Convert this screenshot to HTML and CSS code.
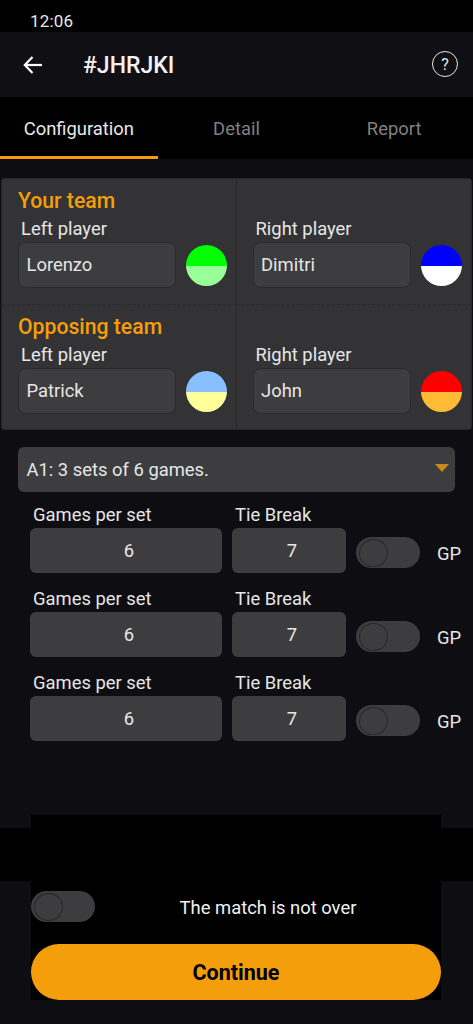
FILE: index.html
```html
<!DOCTYPE html>
<html lang="en">
<head>
<meta charset="utf-8">
<title>#JHRJKI</title>
<link rel="stylesheet" href="styles.css">
</head>
<body>
<div class="app">
  <div class="status">12:06</div>
  <header class="appbar">
    <svg class="back" width="22" height="20" viewBox="0 0 22 20" fill="none" stroke="#fff" stroke-width="2.2"><path d="M20 10H3"/><path d="M10.5 2 2.8 10l7.7 8"/></svg>
    <h1 class="title">#JHRJKI</h1>
    <span class="help">?</span>
  </header>
  <nav class="tabs">
    <div class="tab active">Configuration</div>
    <div class="tab">Detail</div>
    <div class="tab">Report</div>
  </nav>
  <main class="content">
    <section class="card">
      <div class="cell">
        <h2 class="team">Your team</h2>
        <div class="label">Left player</div>
        <div class="player"><div class="input">Lorenzo</div><div class="ball ball-green"></div></div>
      </div>
      <div class="cell cell-right">
        <div class="team team-spacer"></div>
        <div class="label">Right player</div>
        <div class="player"><div class="input">Dimitri</div><div class="ball ball-blue"></div></div>
      </div>
      <div class="cell cell-bottom">
        <h2 class="team">Opposing team</h2>
        <div class="label">Left player</div>
        <div class="player"><div class="input">Patrick</div><div class="ball ball-sky"></div></div>
      </div>
      <div class="cell cell-right cell-bottom">
        <div class="team team-spacer"></div>
        <div class="label">Right player</div>
        <div class="player"><div class="input">John</div><div class="ball ball-red"></div></div>
      </div>
    </section>
    <div class="select"><span>A1: 3 sets of 6 games.</span><i class="caret"></i></div>
    <div class="sets">
      <div class="set">
        <div class="field field-games"><div class="set-label">Games per set</div><div class="num">6</div></div>
        <div class="field field-tb"><div class="set-label">Tie Break</div><div class="num">7</div></div>
        <div class="switch"><i class="knob"></i></div>
        <div class="gp">GP</div>
      </div>
      <div class="set">
        <div class="field field-games"><div class="set-label">Games per set</div><div class="num">6</div></div>
        <div class="field field-tb"><div class="set-label">Tie Break</div><div class="num">7</div></div>
        <div class="switch"><i class="knob"></i></div>
        <div class="gp">GP</div>
      </div>
      <div class="set">
        <div class="field field-games"><div class="set-label">Games per set</div><div class="num">6</div></div>
        <div class="field field-tb"><div class="set-label">Tie Break</div><div class="num">7</div></div>
        <div class="switch"><i class="knob"></i></div>
        <div class="gp">GP</div>
      </div>
    </div>
  </main>
  <footer class="footer">
    <div class="over">
      <div class="switch"><i class="knob"></i></div>
      <div class="over-text">The match is not over</div>
    </div>
    <button class="continue">Continue</button>
  </footer>
</div>
</body>
</html>
```
FILE: styles.css
```css
* { box-sizing: border-box; }
html, body { margin: 0; padding: 0; background: #0d0d12; }
body { font-family: Roboto, "Liberation Sans", sans-serif; color: #e6e6e6; }
.app { width: 473px; height: 1024px; overflow: hidden; display: flex; flex-direction: column; position: relative; }

.status { height: 32px; background: #000; color: #e8e8e8; font-size: 17px; line-height: 17px; padding: 13px 0 0 30px; letter-spacing: 0.2px; }

.appbar { height: 65px; background: #101014; display: flex; align-items: center; padding: 0 15px 0 22px; }
.back { flex: none; }
.title { margin: 1px 0 0 39px; flex: 1; font-size: 23px; font-weight: 500; color: #f2f2f2; }
.help { width: 26px; height: 26px; border: 1.3px solid #e8e8e8; border-radius: 50%; display: flex; align-items: center; justify-content: center; font-size: 16px; color: #e8e8e8; margin-top: -1px; }

.tabs { height: 62px; background: #000; display: grid; grid-template-columns: repeat(3, 1fr); }
.tab { display: flex; align-items: center; justify-content: center; font-size: 18.4px; color: #808080; padding-top: 1px; }
.tab.active { color: #e8e8e8; border-bottom: 3px solid #f59e0b; padding-top: 4px; }

.content { flex: 1; padding-top: 19px; }

.card { margin: 0 1px 0 1px; height: 252px; background: #333336; border: 1px solid #262629; border-radius: 3px; display: grid; grid-template-columns: 234px 1fr; grid-template-rows: 125px 1fr; }
.cell { padding: 9px 0 0 16px; }
.cell-right { border-left: 1px solid #28282b; padding-left: 15.5px; }
.cell-bottom { border-top: 1px dashed #2a2a2d; }
.team { margin: 0; height: 25px; font-size: 21.2px; line-height: 25px; font-weight: 500; color: #f59e0b; }
.label { font-size: 18.4px; line-height: 24px; margin: 4px 0 0 3px; color: #e6e6e6; height: 24px; }
.player { display: flex; align-items: center; gap: 10px; margin-top: 1px; }
.input { width: 158px; height: 46px; background: #3d3d40; border: 1px solid #2a2a2d; border-radius: 8px; font-size: 18.4px; line-height: 44px; padding-left: 7.5px; color: #e6e6e6; }
.ball { width: 41px; height: 41px; border-radius: 50%; }
.ball-green { background: linear-gradient(#00ff00 50%, #99ff99 50%); }
.ball-blue { background: linear-gradient(#0000ff 50%, #ffffff 50%); }
.ball-sky { background: linear-gradient(#88c0ff 50%, #ffff99 50%); }
.ball-red { background: linear-gradient(#ff0000 50%, #ffbb33 50%); }

.select { margin: 17px 18px 0 17.5px; height: 45px; background: #3d3d40; border-radius: 6px; display: flex; align-items: center; justify-content: space-between; padding: 0 6px 0 9px; font-size: 18.4px; color: #e6e6e6; }
.caret { width: 0; height: 0; border-left: 7.5px solid transparent; border-right: 7.5px solid transparent; border-top: 8px solid #c98a1c; margin-bottom: 3px; }

.sets { padding: 8px 0 0 30px; display: flex; flex-direction: column; }
.set { height: 84px; display: flex; align-items: flex-end; padding-bottom: 11px; }
.field { display: flex; flex-direction: column; }
.field-games { width: 192px; }
.field-tb { width: 114px; margin-left: 10px; }
.set-label { font-size: 18.4px; line-height: 24px; padding-left: 3px; margin-bottom: 1px; color: #e6e6e6; }
.num { height: 45px; background: #3d3d40; border-radius: 6px; font-size: 18.4px; line-height: 45px; text-align: center; color: #e6e6e6; padding-left: 6px; }
.switch { flex: none; width: 64px; height: 31px; background: #3d3d40; border-radius: 16px; position: relative; }
.knob { position: absolute; left: 2.5px; top: 1.5px; width: 29px; height: 28px; border: 1px solid #28282a; border-radius: 50%; background: #3d3d40; }
.set .switch { margin: 0 0 5px 10px; }
.gp { width: 24px; margin: 0 0 7px 17px; font-size: 18.4px; line-height: 24px; color: #e6e6e6; }

.footer { position: absolute; left: 31px; top: 815px; width: 410px; height: 185px; background: #000; display: flex; flex-direction: column; justify-content: flex-end; }
.footer::before { content: ""; position: absolute; left: -31px; width: 473px; top: 13px; height: 53px; background: #000; }
.over { position: relative; display: flex; align-items: center; height: 31px; margin-bottom: 22px; }
.over-text { flex: 1; font-size: 18.4px; text-align: center; color: #f0f0f0; padding-top: 2px; }
.continue { position: relative; height: 56px; width: 410px; border: 0; border-radius: 28px; background: #f59e0b; color: #000; font-family: Roboto, "Liberation Sans", sans-serif; font-size: 21.5px; font-weight: 700; padding: 0; }
```
